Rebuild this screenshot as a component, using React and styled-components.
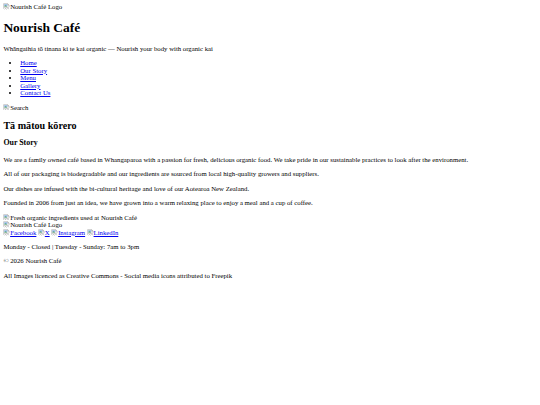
import React from "react";
import styled, { createGlobalStyle } from "styled-components";

const Global = createGlobalStyle`
  html, body { margin: 0; padding: 0; background: #fff; }
`;

const Page = styled.div`
  zoom: 0.421875;
  padding: 8px;
  font-family: "Liberation Serif", "Times New Roman", serif;
  font-size: 16px;
  line-height: 18px;
  color: #000;
`;

const Header = styled.header``;
const Main = styled.main``;
const Footer = styled.footer``;

const Title = styled.h1`
  font-size: 32px;
  line-height: 36.8px;
  font-weight: bold;
  margin: 21.44px 0;
`;

const SectionTitle = styled.h2`
  font-size: 24px;
  line-height: 27px;
  font-weight: bold;
  margin: 19.92px 0;
`;

const SubTitle = styled.h3`
  font-size: 18.72px;
  line-height: 21px;
  font-weight: bold;
  margin: 18.72px 0;
`;

const Para = styled.p`
  margin: 16px 0;
`;

const NavList = styled.ul`
  margin: 16px 0;
  padding-left: 40px;
  list-style: disc;
`;

const Link = styled.a`
  color: #0000ee;
  text-decoration: underline;
  cursor: pointer;
`;

const Block = styled.div``;

const AltWrap = styled.span`
  display: inline;
`;

const AltIcon = styled.svg`
  width: 16px;
  height: 16px;
  vertical-align: -2px;
`;

function BrokenIcon() {
  return (
    <AltIcon viewBox="0 0 16 16" aria-hidden="true">
      <path d="M1.5 1.5 H11 L14.5 5 V9 L12 11.5 L9.5 9.5 L6.5 12.5 L4 10.5 L1.5 13 Z" fill="#f2f2f2" stroke="#8f8f8f" strokeWidth="1" />
      <path d="M11 1.5 V5 H14.5" fill="none" stroke="#8f8f8f" strokeWidth="1" />
      <rect x="3" y="3" width="7" height="5" fill="#8fb8e8" />
      <path d="M3 8 L5.5 5.5 L7.5 7.5 L8.5 6.5 L10 8 Z" fill="#4f9d3f" />
      <path d="M3.5 15 L6 12.8 L8.5 14.8 L11.5 12 L14.5 14.8" fill="none" stroke="#8f8f8f" strokeWidth="1" />
    </AltIcon>
  );
}

function AltImg({ alt }) {
  return (
    <AltWrap role="img" aria-label={alt}>
      <BrokenIcon />
      {alt}
    </AltWrap>
  );
}

const navItems = ["Home", "Our Story", "Menu", "Gallery", "Contact Us"];
const socials = ["Facebook", "X", "Instagram", "LinkedIn"];

export default function App() {
  return (
    <>
      <Global />
      <Page>
        <Header>
          <AltImg alt="Nourish Café Logo" />
          <Title>Nourish Café</Title>
          <Para>Whāngaihia tō tinana ki te kai organic — Nourish your body with organic kai</Para>
          <nav>
            <NavList>
              {navItems.map((n) => (
                <li key={n}>
                  <Link href="#">{n}</Link>
                </li>
              ))}
            </NavList>
          </nav>
          <Block>
            <AltImg alt="Search" />
          </Block>
        </Header>
        <Main>
          <SectionTitle>Tā mātou kōrero</SectionTitle>
          <SubTitle>Our Story</SubTitle>
          <Para>
            We are a family owned café based in Whangaparoa with a passion for fresh, delicious organic food. We take pride in our sustainable practices to look after the environment.
          </Para>
          <Para>
            All of our packaging is biodegradable and our ingredients are sourced from local high-quality growers and suppliers.
          </Para>
          <Para>Our dishes are infused with the bi-cultural heritage and love of our Aotearoa New Zealand.</Para>
          <Para>
            Founded in 2006 from just an idea, we have grown into a warm relaxing place to enjoy a meal and a cup of coffee.
          </Para>
          <Block>
            <AltImg alt="Fresh organic ingredients used at Nourish Café" />
          </Block>
        </Main>
        <Footer>
          <Block>
            <AltImg alt="Nourish Café Logo" />
          </Block>
          <Block>
            {socials.map((s, i) => (
              <React.Fragment key={s}>
                <Link href="#">
                  <AltImg alt={s} />
                </Link>
                {i < socials.length - 1 ? " " : null}
              </React.Fragment>
            ))}
          </Block>
          <Para>Monday - Closed | Tuesday - Sunday: 7am to 3pm</Para>
          <Para>© 2026 Nourish Café</Para>
          <Para>All Images licenced as Creative Commons - Social media icons attributed to Freepik</Para>
        </Footer>
      </Page>
    </>
  );
}
